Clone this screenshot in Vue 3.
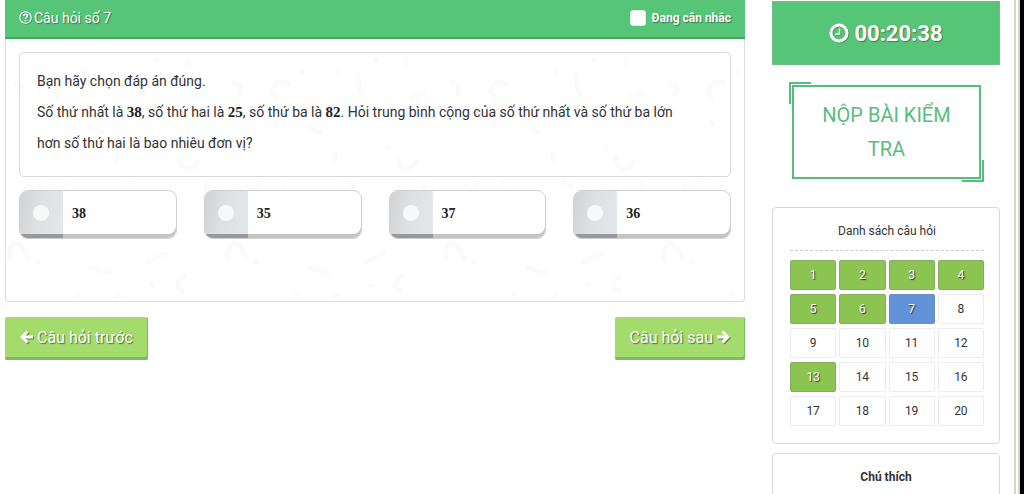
<script setup>
import { ref } from 'vue'

const answers = [38, 35, 37, 36]
const chosen = ref(null)
const considering = ref(false)
const done = [1, 2, 3, 4, 5, 6, 13]
const current = 7
</script>

<template>
  <div class="page">
    <div class="content">
      <main class="main">
        <section class="panel">
          <header class="panel-head">
            <h1 class="title">
              <svg class="icon-sm" viewBox="0 0 24 24" aria-hidden="true">
                <circle cx="12" cy="12" r="10.500" />
                <path class="mark" d="M8.300 9.200C9 6.900 10.300 6.100 12.200 6.100c2.100 0 3.600 1.200 3.600 3 0 2.600-3.600 2.800-3.600 5.200M12.200 16.200v2.600" />
              </svg>
              Câu hỏi số 7
            </h1>
            <label class="consider">
              <input v-model="considering" type="checkbox" class="check">
              Đang cân nhắc
            </label>
          </header>
          <div class="panel-body">
            <svg class="doodles" aria-hidden="true">
              <defs>
                <pattern id="marks" width="218" height="300" x="-6" y="-39" patternUnits="userSpaceOnUse">
                  <g fill="none" stroke="#fbfbfb" stroke-width="5" stroke-linecap="round">
                    <path d="M70 84c-12-6-20 6-12 13M84 72h1M120 72h1M140 74c0 8 1 14 4 20M157 60h1M189 60v5M194 97l12-4" />
                    <path d="M57 123h1M117 154v6M170 147h1M180 158c0 14 12 16 18 3M16 83c8 1 8 8 5 12M92 128l10 4" />
                    <path d="M10 260c-2-20 10-24 18-2M38 262l1 1M148 262l18-9M92 268l18 5M184 276c-9 6-8 16-1 15M152 285h1M78 295h1M116 297l4-1" />
                    <path d="M30 186c4 6 10 4 12-3M66 184h1M128 182l8 4M206 184v10" />
                  </g>
                </pattern>
              </defs>
              <rect width="100%" height="100%" fill="url(#marks)" />
            </svg>
            <div class="question">
              <p>Bạn hãy chọn đáp án đúng.</p>
              <p>
                Số thứ nhất là <b class="num">38</b>, số thứ hai là <b class="num">25</b>, số thứ ba là
                <b class="num">82</b>. Hỏi trung bình cộng của số thứ nhất và số thứ ba lớn<br>
                hơn số thứ hai là bao nhiêu đơn vị?
              </p>
            </div>
            <div class="answers">
              <label v-for="a in answers" :key="a" class="answer">
                <span class="pick"><input v-model="chosen" type="radio" name="answer" :value="a" class="radio"></span>
                <b class="num value">{{ a }}</b>
              </label>
            </div>
          </div>
        </section>
        <nav class="steps">
          <button type="button" class="step">
            <svg class="arrow" viewBox="0 0 14 14" aria-hidden="true"><path d="M7.500 1.500L2 7l5.500 5.500M2.500 7H13" /></svg>
            Câu hỏi trước
          </button>
          <button type="button" class="step">
            Câu hỏi sau
            <svg class="arrow" viewBox="0 0 14 14" aria-hidden="true"><path d="M6.500 1.500L12 7l-5.500 5.500M11.500 7H1" /></svg>
          </button>
        </nav>
      </main>

      <aside class="side">
        <div class="timer">
          <svg class="clock" viewBox="0 0 20 20" aria-hidden="true">
            <circle cx="10" cy="10" r="8" />
            <path class="hands" d="M10.500 5.500v5.500H6.500" />
          </svg>
          <span>00:20:38</span>
        </div>
        <button type="button" class="submit">NỘP BÀI KIỂM TRA</button>
        <section class="card">
          <h2 class="card-title">Danh sách câu hỏi</h2>
          <div class="cells">
            <button
              v-for="n in 20"
              :key="n"
              type="button"
              class="cell"
              :class="{ done: done.includes(n), current: n === current }"
            >{{ n }}</button>
          </div>
        </section>
        <section class="card legend">
          <h2 class="legend-title">Chú thích</h2>
        </section>
      </aside>
    </div>
    <div class="rail"></div>
  </div>
</template>

<style>
body { background: #fff; }
</style>

<style scoped>
* { box-sizing: border-box; }
.page {
  display: flex;
  height: 100vh;
  overflow: hidden;
  font-family: Roboto, "Liberation Sans", sans-serif;
  font-size: 14px;
  color: #333;
}
button { font-family: inherit; cursor: pointer; }
h1, h2, p { margin: 0; font-weight: 400; }
.content {
  flex: 1;
  display: grid;
  grid-template-columns: minmax(0, 1fr) 228px;
  align-items: start;
  gap: 27px;
  padding: 0 14px 0 5px;
}
.rail {
  width: 10px;
  background: #000;
  background-clip: padding-box;
  border-left: 6px double #d5d3cb;
}
.panel { border: 1px solid #dcdcdc; border-top: 0; border-radius: 0 0 4px 4px; }
.panel-head {
  display: flex;
  justify-content: space-between;
  align-items: center;
  height: 39px;
  margin: 0 -1px;
  padding: 0 14px 2px;
  background: #57c578;
  border-bottom: 2px solid #48a263;
  color: #fff;
  text-shadow: 1px 1px 1px #34784a;
}
.title { display: flex; align-items: center; gap: 2px; font-size: 14px; }
.icon-sm {
  width: 13px;
  height: 13px;
  overflow: visible;
  fill: none;
  stroke: #fff;
  stroke-width: 2;
  filter: drop-shadow(1px 1px 0 #459d60);
}
.mark { stroke-width: 3; }
.consider { display: flex; align-items: center; gap: 6px; font-size: 12px; font-weight: 700; }
.check {
  appearance: none;
  width: 16px;
  height: 16px;
  margin: 0;
  border: 1px solid #e3ebe5;
  border-radius: 3px;
  background: #fff;
}
.check:checked { background: #5b92d8; }
.panel-body { position: relative; padding: 13px 13px 62px; }
.doodles { position: absolute; inset: 0; width: 100%; height: 100%; }
.question {
  position: relative;
  padding: 13px 17px 17px;
  border: 1px solid #d9d9d9;
  border-radius: 5px;
  line-height: 31px;
}
.num { font-family: "Liberation Serif", serif; font-size: 15px; line-height: 1; color: #222; }
.answers { position: relative; display: grid; grid-template-columns: repeat(4, 1fr); gap: 27px; margin-top: 13px; }
.answer {
  position: relative;
  display: flex;
  height: 49px;
  overflow: hidden;
  border: 1px solid #cfcfcf;
  border-radius: 9px;
  background: #fff;
  box-shadow: inset 0 -4px #c5c5c5;
}
.pick {
  display: flex;
  align-items: center;
  width: 43px;
  padding: 0 0 4px 13px;
  background: linear-gradient(100deg, #d2d2d3, #dfe2e4 50%, #e3e8ec);
  box-shadow: inset 0 -4px #999;
}
.radio {
  appearance: none;
  width: 16px;
  height: 16px;
  margin: 0;
  border-radius: 50%;
  background: #f7f8f8;
}
.radio:checked { border: 4px solid #5b92d8; }
.value { align-self: center; padding: 0 0 2px 9px; font-size: 14px; }
.steps { display: flex; justify-content: space-between; margin-top: 15px; }
.step {
  display: flex;
  align-items: center;
  gap: 3px;
  height: 43px;
  padding: 0 15px 3px;
  border: 0;
  border-radius: 2px;
  background: #a3dc6c;
  box-shadow: inset -1px -3px #7dbb68;
  color: #fff;
  font-size: 16px;
  text-shadow: 1px 1px 1px #4e6f31;
}
.arrow {
  width: 14px;
  height: 14px;
  fill: none;
  stroke: #fff;
  stroke-width: 3;
  filter: drop-shadow(1px 1px 0 #5e823d);
}
.timer {
  display: flex;
  justify-content: center;
  align-items: center;
  gap: 5px;
  height: 64px;
  margin-top: 1px;
  border: 1px solid #72bd87;
  background: #57c578;
  color: #fff;
  font-size: 22px;
  font-weight: 700;
  text-shadow: 1px 1px 1px #4d7a43;
}
.clock {
  width: 20px;
  height: 20px;
  fill: none;
  stroke: #fff;
  stroke-width: 3;
  filter: drop-shadow(1px 1px 0 #4b9a58);
}
.hands { stroke-width: 1.5; }
.submit {
  position: relative;
  display: block;
  width: calc(100% - 39px);
  margin: 20px 19px 0 20px;
  padding: 11px 20px;
  border: 2px solid #57bd7e;
  background: #fff;
  color: #57bd7e;
  font-size: 20px;
  line-height: 34px;
  font-weight: 400;
}
.submit::before, .submit::after {
  content: "";
  position: absolute;
  width: 20px;
  height: 20px;
  border: solid #57bd7e;
}
.submit::before { top: -5px; left: -5px; border-width: 2px 0 0 2px; }
.submit::after { right: -5px; bottom: -5px; border-width: 0 2px 2px 0; }
.card {
  margin-top: 28px;
  padding: 6px 15px 17px 17px;
  border: 1px solid #d8d8d8;
  border-radius: 4px;
}
.card-title {
  padding-bottom: 2px;
  border-bottom: 1px dashed #ccc;
  font-size: 12px;
  line-height: 34px;
  text-align: center;
}
.cells { display: grid; grid-template-columns: repeat(4, 1fr); gap: 4px 3px; margin-top: 9px; }
.cell {
  height: 30px;
  padding: 0 0 1px;
  border: 1px solid #ececec;
  border-radius: 2px;
  background: #fff;
  color: #333;
  font-size: 12px;
}
.done { background: #8cc452; border-color: #85ab60; color: #fff; text-shadow: 1px 1px 1px #333; }
.current { background: #6293d9; border-color: #6d8fbd; color: #fff; text-shadow: 1px 1px 1px #333; }
.legend { margin-top: 9px; padding: 6px 15px 24px; }
.legend-title { font-size: 12px; line-height: 34px; font-weight: 700; text-align: center; }
</style>
